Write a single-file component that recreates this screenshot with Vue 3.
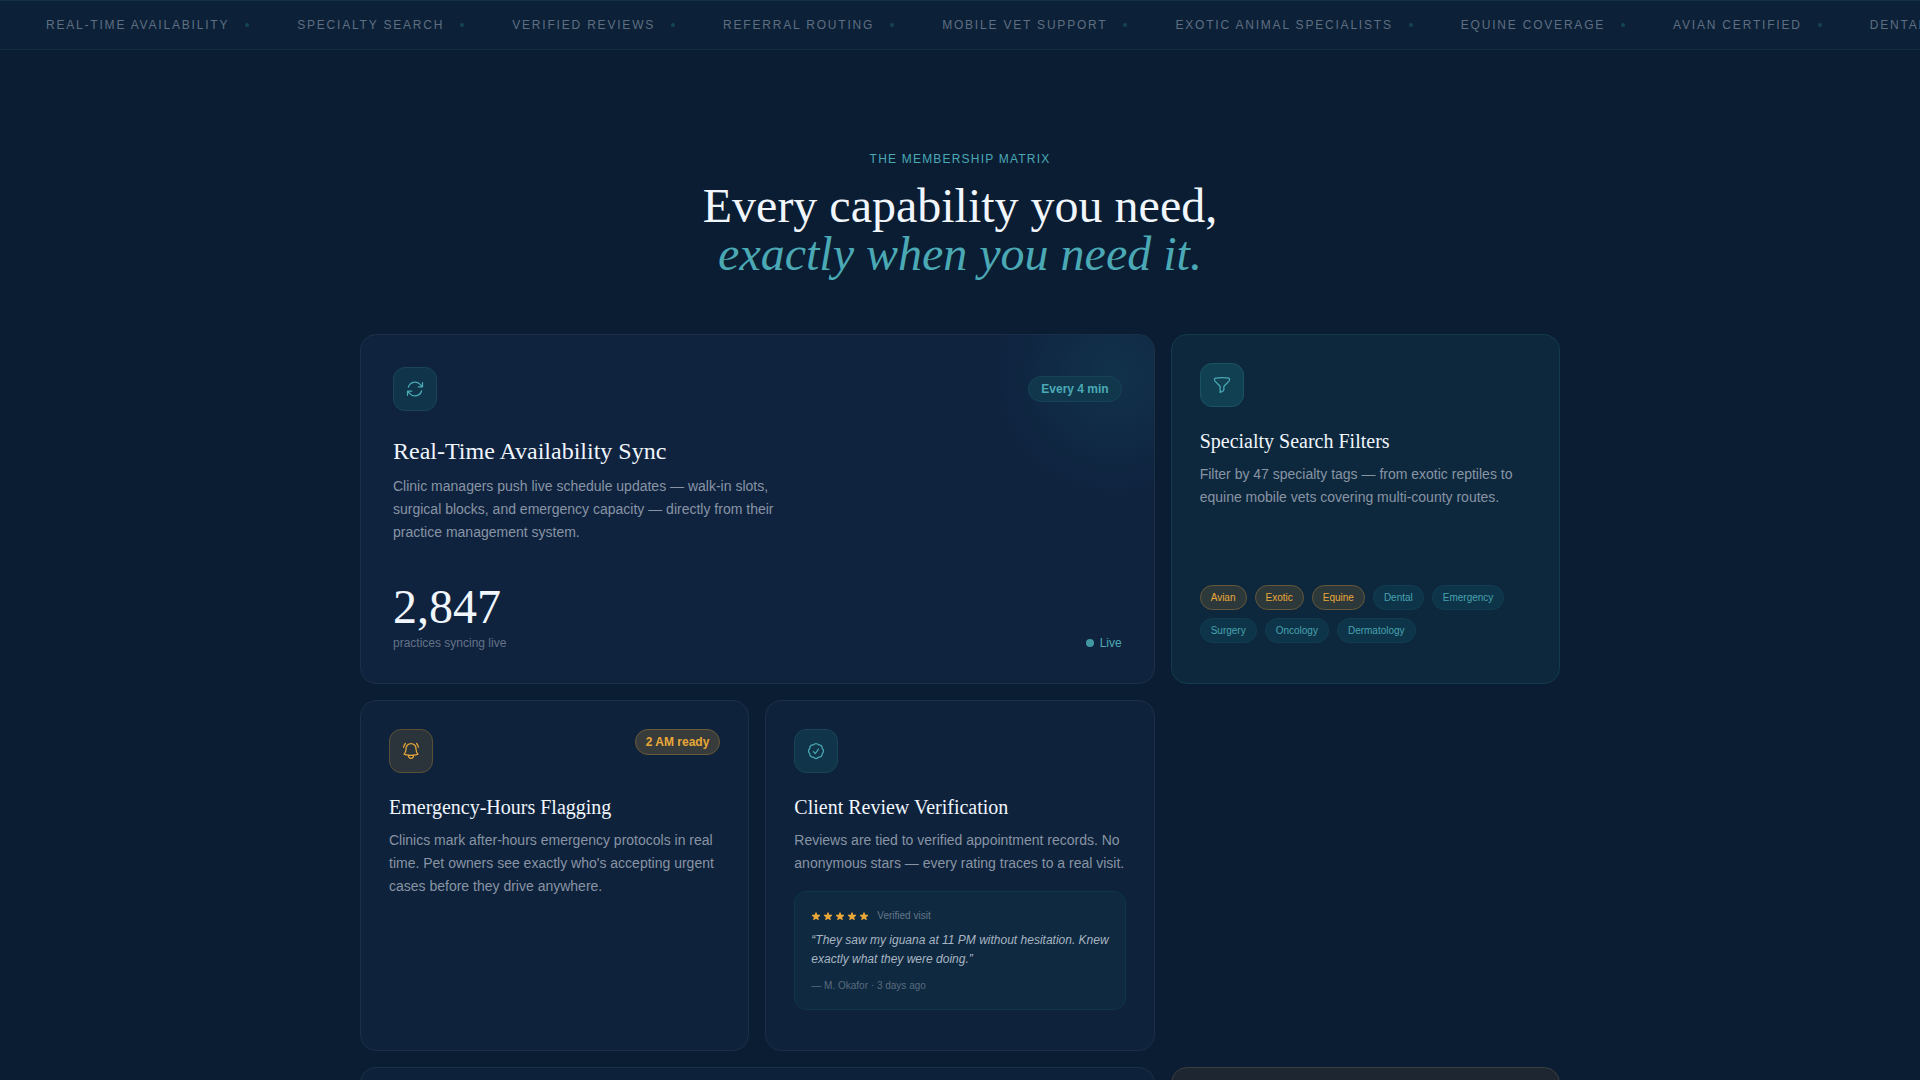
<script setup>
const ticker = [
  'Real-time availability',
  'Specialty search',
  'Verified reviews',
  'Referral routing',
  'Mobile vet support',
  'Exotic animal specialists',
  'Equine coverage',
  'Avian certified',
  'Dental specialists',
]

const tags = [
  { name: 'Avian', hot: true },
  { name: 'Exotic', hot: true },
  { name: 'Equine', hot: true },
  { name: 'Dental' },
  { name: 'Emergency' },
  { name: 'Surgery' },
  { name: 'Oncology' },
  { name: 'Dermatology' },
]
</script>

<template>
  <div class="page">
    <div class="ticker">
      <ul class="ticker-track">
        <li v-for="item in ticker" :key="item" class="ticker-item">
          <span>{{ item }}</span>
          <i class="ticker-dot"></i>
        </li>
      </ul>
    </div>

    <main class="section">
      <header class="head">
        <p class="eyebrow">The Membership Matrix</p>
        <h2 class="title">Every capability you need,<br /><em>exactly when you need it.</em></h2>
      </header>

      <div class="grid">
        <article class="card card-wide card-sync">
          <div class="glow"></div>
          <div class="card-top card-top-center">
            <span class="icon">
              <svg viewBox="0 0 24 24"><path d="M16.023 9.348h4.992v-.001M2.985 19.644v-4.992m0 0h4.992m-4.993 0 3.181 3.183a8.25 8.25 0 0 0 13.803-3.7M4.031 9.865a8.25 8.25 0 0 1 13.803-3.7l3.181 3.182m0-4.991v4.99" /></svg>
            </span>
            <span class="badge">Every 4 min</span>
          </div>
          <h3 class="name name-large">Real-Time Availability Sync</h3>
          <p class="text text-narrow">
            Clinic managers push live schedule updates — walk-in slots, surgical blocks, and
            emergency capacity — directly from their practice management system.
          </p>
          <div class="stat-row">
            <div>
              <div class="stat">2,847</div>
              <div class="stat-label">practices syncing live</div>
            </div>
            <div class="live"><i class="live-dot"></i>Live</div>
          </div>
        </article>

        <article class="card card-teal">
          <span class="icon icon-strong">
            <svg viewBox="0 0 24 24"><path d="M12 3c2.755 0 5.455.232 8.083.678.533.09.917.556.917 1.096v1.044a2.25 2.25 0 0 1-.659 1.591l-5.432 5.432a2.25 2.25 0 0 0-.659 1.591v2.927a2.25 2.25 0 0 1-1.244 2.013L9.75 21v-6.568a2.25 2.25 0 0 0-.659-1.591L3.659 7.409A2.25 2.25 0 0 1 3 5.818V4.774c0-.54.384-1.006.917-1.096A48.32 48.32 0 0 1 12 3Z" /></svg>
          </span>
          <h3 class="name">Specialty Search Filters</h3>
          <p class="text">
            Filter by 47 specialty tags — from exotic reptiles to equine mobile vets covering
            multi-county routes.
          </p>
          <ul class="tags">
            <li v-for="tag in tags" :key="tag.name" class="tag" :class="{ 'tag-hot': tag.hot }">
              {{ tag.name }}
            </li>
          </ul>
        </article>

        <article class="card">
          <div class="card-top">
            <span class="icon icon-amber">
              <svg viewBox="0 0 24 24"><path d="M14.857 17.082a23.848 23.848 0 0 0 5.454-1.31A8.967 8.967 0 0 1 18 9.75V9A6 6 0 0 0 6 9v.75a8.967 8.967 0 0 1-2.312 6.022c1.733.64 3.56 1.085 5.455 1.31m5.714 0a24.255 24.255 0 0 1-5.714 0m5.714 0a3 3 0 1 1-5.714 0M3.124 7.5A8.969 8.969 0 0 1 5.292 3m13.416 0a8.969 8.969 0 0 1 2.168 4.5" /></svg>
            </span>
            <span class="badge badge-amber">2 AM ready</span>
          </div>
          <h3 class="name">Emergency-Hours Flagging</h3>
          <p class="text">
            Clinics mark after-hours emergency protocols in real time. Pet owners see exactly
            who's accepting urgent cases before they drive anywhere.
          </p>
        </article>

        <article class="card">
          <span class="icon">
            <svg viewBox="0 0 24 24"><path d="M9 12.75 11.25 15 15 9.75M21 12c0 1.268-.63 2.39-1.593 3.068a3.745 3.745 0 0 1-1.043 3.296 3.745 3.745 0 0 1-3.296 1.043A3.745 3.745 0 0 1 12 21c-1.268 0-2.39-.63-3.068-1.593a3.746 3.746 0 0 1-3.296-1.043 3.745 3.745 0 0 1-1.043-3.296A3.745 3.745 0 0 1 3 12c0-1.268.63-2.39 1.593-3.068a3.745 3.745 0 0 1 1.043-3.296 3.746 3.746 0 0 1 3.296-1.043A3.746 3.746 0 0 1 12 3c1.268 0 2.39.63 3.068 1.593a3.746 3.746 0 0 1 3.296 1.043 3.746 3.746 0 0 1 1.043 3.296A3.745 3.745 0 0 1 21 12Z" /></svg>
          </span>
          <h3 class="name">Client Review Verification</h3>
          <p class="text">
            Reviews are tied to verified appointment records. No anonymous stars — every rating
            traces to a real visit.
          </p>
          <figure class="review">
            <div class="review-top">
              <div class="stars">
                <svg v-for="n in 5" :key="n" viewBox="0 0 20 20"><path d="M10.868 2.884c-.321-.772-1.415-.772-1.736 0l-1.83 4.401-4.753.381c-.833.067-1.171 1.107-.536 1.651l3.62 3.102-1.106 4.637c-.194.813.691 1.456 1.405 1.02L10 15.591l4.069 2.485c.713.436 1.598-.207 1.404-1.02l-1.106-4.637 3.62-3.102c.635-.544.297-1.584-.536-1.65l-4.752-.382-1.831-4.401Z" /></svg>
              </div>
              <span>Verified visit</span>
            </div>
            <blockquote class="quote">“They saw my iguana at 11 PM without hesitation. Knew exactly what they were doing.”</blockquote>
            <figcaption class="author">— M. Okafor · 3 days ago</figcaption>
          </figure>
        </article>

        <article class="card card-wide card-next"></article>
        <article class="card card-amber"></article>
      </div>
    </main>
  </div>
</template>

<style>
body {
  background: #0a1d33;
}
</style>

<style scoped>
.page {
  height: 100vh;
  overflow: hidden;
  background: #0a1d33;
  color: #f0f6fc;
  font-family: "Liberation Sans", Arial, sans-serif;
}

ul,
p,
h2,
h3,
figure,
blockquote {
  margin: 0;
  padding: 0;
  font-weight: 400;
}

ul {
  list-style: none;
}

.ticker {
  overflow: hidden;
  border-top: 1px solid #122f43;
  border-bottom: 1px solid #112f42;
  background: #0c2138;
}

.ticker-track {
  display: flex;
  gap: 48px;
  width: max-content;
  padding: 16px 0 16px 46px;
}

.ticker-item {
  display: flex;
  align-items: center;
  gap: 16px;
  color: #5f6e81;
  font-size: 12px;
  line-height: 16px;
  letter-spacing: 0.15em;
  text-transform: uppercase;
  white-space: nowrap;
}

.ticker-dot {
  width: 4px;
  height: 4px;
  border-radius: 50%;
  background: #164353;
}

.section {
  max-width: 1200px;
  margin: 0 auto;
  padding: 100px 24px;
}

.head {
  margin-bottom: 56px;
  text-align: center;
}

.eyebrow {
  margin-bottom: 14px;
  color: #4ba9b5;
  font-size: 12px;
  line-height: 18px;
  letter-spacing: 0.1em;
  text-transform: uppercase;
}

.title {
  font-family: "Liberation Serif", "Times New Roman", serif;
  font-size: 48px;
  line-height: 48px;
}

.title em {
  color: #4ba9b5;
}

.grid {
  display: grid;
  grid-template-columns: repeat(3, 1fr);
  grid-auto-rows: minmax(350px, auto);
  gap: 16px;
}

.card {
  position: relative;
  display: flex;
  flex-direction: column;
  overflow: hidden;
  box-sizing: border-box;
  padding: 28px 28px 40px;
  border: 1px solid #1b3048;
  border-radius: 16px;
  background: #0e223b;
}

.card-wide {
  grid-column: span 2;
}

.card-sync {
  padding: 32px;
  background: #0f233f;
}

.card-teal {
  border-color: #123b4c;
  background: #0d283d;
}

.card-next {
  background: #0d223a;
}

.card-amber {
  grid-column: 3;
  border-color: #3a3e3f;
  background: #1e2731;
}

.glow {
  position: absolute;
  top: -80px;
  right: -80px;
  width: 240px;
  height: 240px;
  border-radius: 50%;
  background: radial-gradient(circle, rgba(26, 107, 122, 0.2) 0%, rgba(26, 107, 122, 0) 70%);
}

.card-top {
  position: relative;
  display: flex;
  align-items: flex-start;
  justify-content: space-between;
}

.card-top-center {
  align-items: center;
}

.icon {
  display: flex;
  align-items: center;
  justify-content: center;
  box-sizing: border-box;
  width: 44px;
  height: 44px;
  border: 1px solid #194555;
  border-radius: 12px;
  background: #10344a;
  color: #4ba9b5;
}

.icon svg {
  width: 20px;
  height: 20px;
  fill: none;
  stroke: currentColor;
  stroke-width: 1.5;
  stroke-linecap: round;
  stroke-linejoin: round;
}

.icon-strong {
  border-color: #1b5363;
  background: #114053;
}

.icon-amber {
  border-color: #5b5037;
  background: #2c343b;
  color: #e8a838;
}

.badge {
  padding: 4px 12px;
  border: 1px solid #17435a;
  border-radius: 13px;
  background: #10374c;
  color: #4ba9b5;
  font-size: 12px;
  font-weight: 700;
  line-height: 16px;
}

.badge-amber {
  padding: 4px 10px;
  border-color: #6b5a38;
  background: #383b3b;
  color: #e8a838;
}

.name {
  margin: 20px 0 8px;
  font-family: "Liberation Serif", "Times New Roman", serif;
  font-size: 20px;
  line-height: 28px;
}

.name-large {
  margin-top: 24px;
  font-size: 24px;
  line-height: 32px;
}

.text {
  color: #8894a4;
  font-size: 14px;
  line-height: 23px;
}

.text-narrow {
  max-width: 384px;
}

.stat-row {
  display: flex;
  align-items: flex-end;
  justify-content: space-between;
  margin-top: auto;
}

.stat {
  margin-bottom: 4px;
  font-family: "Liberation Serif", "Times New Roman", serif;
  font-size: 48px;
  line-height: 48px;
}

.stat-label {
  color: #647286;
  font-size: 12px;
  line-height: 16px;
}

.live {
  display: flex;
  align-items: center;
  gap: 6px;
  color: #4ba9b5;
  font-size: 12px;
  line-height: 16px;
}

.live-dot {
  width: 8px;
  height: 8px;
  border-radius: 50%;
  background: #4198a3;
}

.tags {
  display: flex;
  flex-wrap: wrap;
  gap: 8px;
  margin-top: auto;
}

.tag {
  padding: 4px 10px;
  border: 1px solid #113d50;
  border-radius: 13px;
  background: #0e344a;
  color: #46a2ae;
  font-size: 10px;
  line-height: 15px;
}

.tag-hot {
  border-color: #66583a;
  background: #2d383b;
  color: #e8a838;
}

.review {
  margin-top: 16px;
  padding: 16px;
  border: 1px solid #10344a;
  border-radius: 12px;
  background: #0e2940;
}

.review-top {
  display: flex;
  align-items: center;
  gap: 8px;
  color: #66778a;
  font-size: 10px;
  line-height: 15px;
}

.stars {
  display: flex;
  gap: 2px;
}

.stars svg {
  width: 10px;
  height: 10px;
  fill: #e8a838;
}

.quote {
  margin: 8px 0 9px;
  color: #a9b5c2;
  font-size: 12px;
  font-style: italic;
  line-height: 19px;
}

.author {
  color: #5a6b7f;
  font-size: 10px;
  line-height: 15px;
}
</style>
